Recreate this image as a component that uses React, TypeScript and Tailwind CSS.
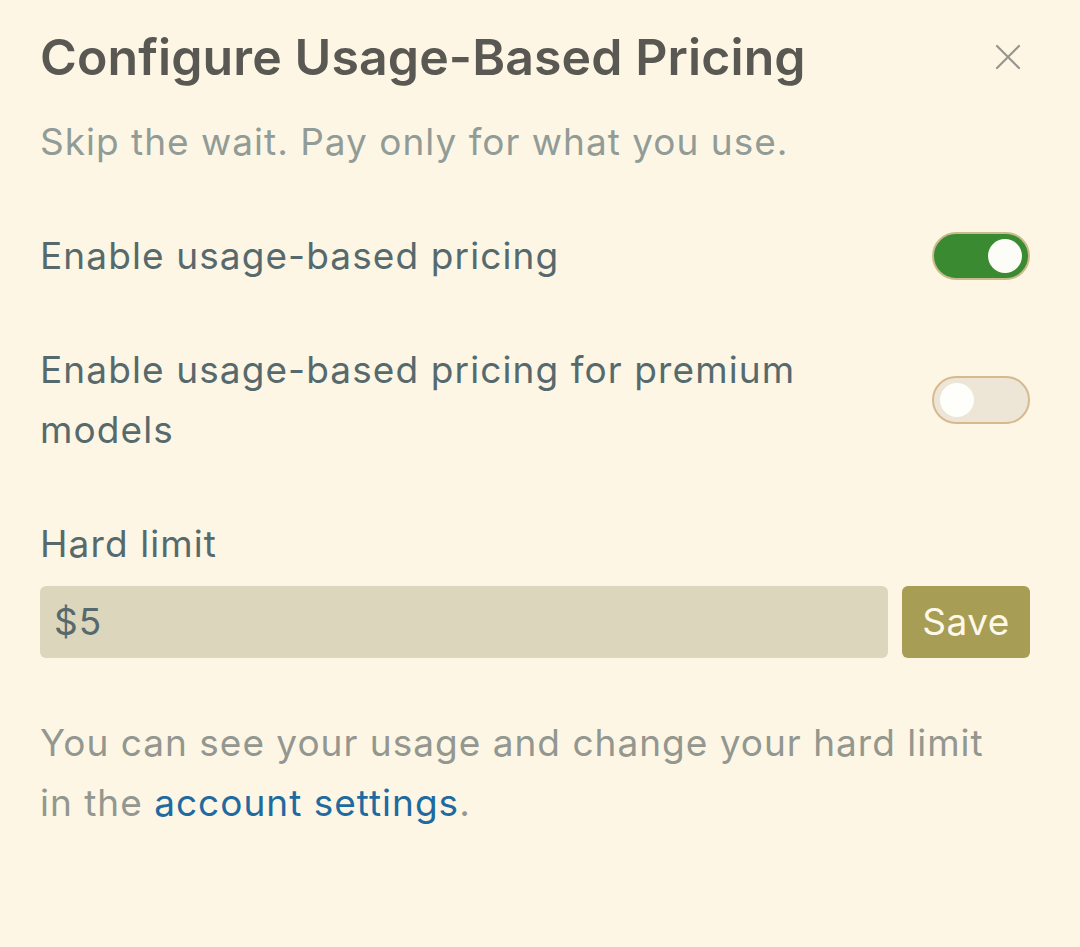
import React from "react";

function Toggle({ on }: { on: boolean }) {
  return on ? (
    <div className="flex h-[48px] w-[98px] shrink-0 items-center justify-end rounded-full border-2 border-[#c9bb8c] bg-[#3a8a31] pr-[6px]">
      <div className="h-[34px] w-[34px] rounded-full bg-[#fdfdf8]" />
    </div>
  ) : (
    <div className="flex h-[48px] w-[98px] shrink-0 items-center justify-start rounded-full border-2 border-[#d6b991] bg-[#ede6d6] pl-[6px]">
      <div className="h-[34px] w-[34px] rounded-full bg-[#fefefb]" />
    </div>
  );
}

export default function App() {
  return (
    <div
      className="min-h-[947px] w-full bg-[#fdf6e4] pl-[40px] pr-[50px] pt-[22px]"
      style={{ fontFamily: "Inter, 'Noto Sans', sans-serif" }}
    >
      <div className="flex items-start justify-between">
        <h1 className="text-[50px] font-semibold leading-[70px] tracking-[0.1px] text-[#5a5853]">
          Configure Usage-Based Pricing
        </h1>
        <button className="mt-[21px] mr-[8px] text-[#969590]">
          <svg width="28" height="28" viewBox="0 0 28 28" fill="none" stroke="currentColor" strokeWidth="2.2" strokeLinecap="round">
            <path d="M3 3L25 25M25 3L3 25" />
          </svg>
        </button>
      </div>
      <p className="mt-[25px] text-[37px] leading-[50px] tracking-[1px] text-[#919c98]">
        Skip the wait. Pay only for what you use.
      </p>

      <div className="mt-[60px] flex items-center justify-between">
        <span className="text-[37px] leading-[58px] tracking-[1.1px] text-[#566a6e]">Enable usage-based pricing</span>
        <Toggle on />
      </div>

      <div className="mt-[55px] flex items-center justify-between">
        <span className="max-w-[820px] text-[37px] leading-[60px] tracking-[1.1px] text-[#566a6e]">
          Enable usage-based pricing for premium models
        </span>
        <Toggle on={false} />
      </div>

      <div className="mt-[55px] text-[37px] leading-[58px] tracking-[1.1px] text-[#566a6e]">Hard limit</div>

      <div className="mt-[13px] flex gap-[14px]">
        <div className="flex h-[72px] flex-1 items-center rounded-[6px] bg-[#dcd6bc] pl-[14px] text-[37px] tracking-[1px] text-[#566a6e]">
          $5
        </div>
        <button className="h-[72px] w-[128px] rounded-[6px] bg-[#a89d55] text-[37px] tracking-[0.5px] text-[#fdf8ea]">
          Save
        </button>
      </div>

      <p className="mt-[55px] max-w-[975px] text-[37px] leading-[60px] tracking-[1px] text-[#939790]">
        You can see your usage and change your hard limit in the{" "}
        <span className="text-[#1f6aa0]">account settings</span>.
      </p>
    </div>
  );
}
